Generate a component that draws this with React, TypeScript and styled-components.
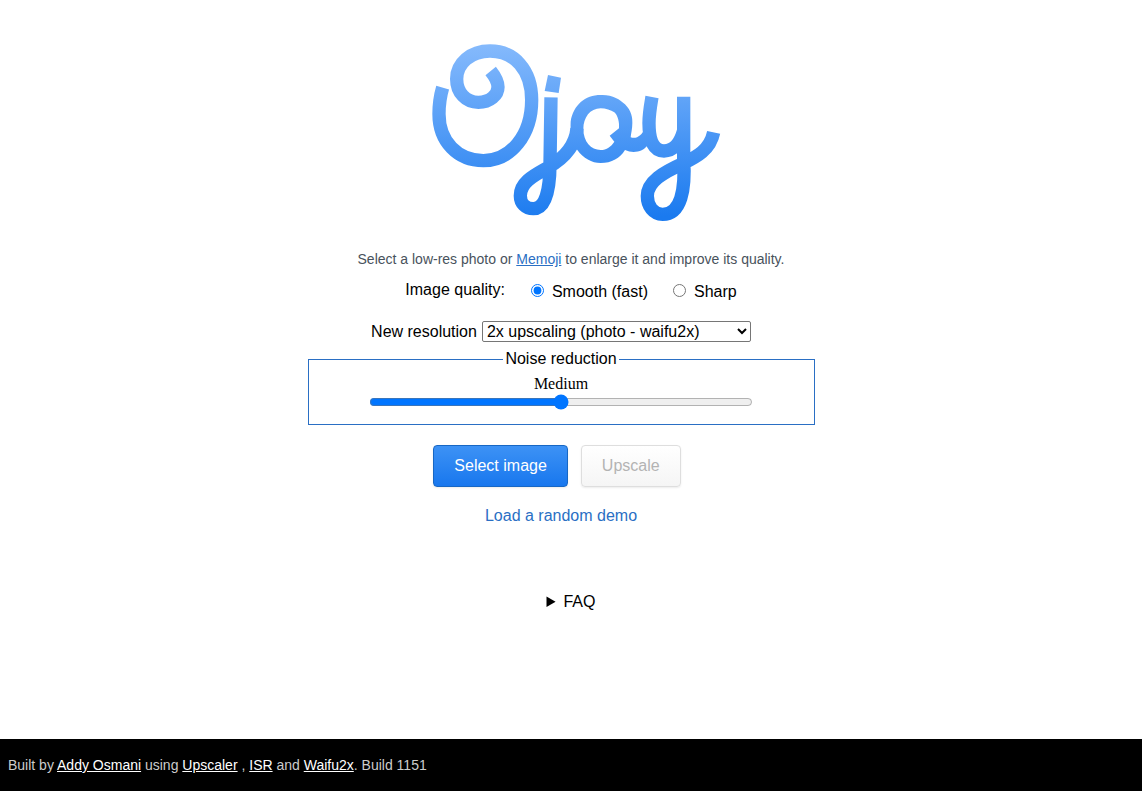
import React, { useState } from 'react';
import styled, { createGlobalStyle } from 'styled-components';

const GlobalStyle = createGlobalStyle`
  * { box-sizing: border-box; }
  body {
    margin: 0;
    background: #fff;
    color: #000;
    font: 16px/20px "Liberation Sans", Arial, sans-serif;
  }
`;

const Page = styled.div`
  min-height: 100vh;
  display: flex;
  flex-direction: column;
`;

const Main = styled.main`
  flex: 1;
  display: flex;
  flex-direction: column;
  align-items: center;
  padding-top: 35px;
`;

const Logo = styled.svg`
  display: block;
  width: 300px;
  height: 190px;
  margin-left: 8px;
`;

const Intro = styled.p`
  margin: 24px 0 0;
  color: #48525c;
  font-size: 14px;
`;

const BlueLink = styled.a`
  color: #2a6fc4;
`;

const Form = styled.form`
  width: 100%;
  display: flex;
  flex-direction: column;
  align-items: center;
  padding-right: 20px;
`;

const QualityRow = styled.div`
  display: flex;
  align-items: flex-start;
  margin: 11px 0 0 20px;
`;

const QualityTitle = styled.span`
  margin-right: 26px;
`;

const Choice = styled.label`
  display: flex;
  align-items: center;
  gap: 8px;
  margin-top: 2px;
  & + & { margin-left: 25px; }
`;

const Radio = styled.input`
  width: 13px;
  height: 13px;
  margin: 0 0 3px;
  accent-color: #0075ff;
`;

const ResolutionRow = styled.div`
  display: flex;
  align-items: center;
  gap: 5px;
  margin-top: 19px;
`;

const Select = styled.select`
  width: 269px;
  height: 21px;
  padding: 0;
  border: 1px solid #767676;
  border-radius: 2px;
  background: #fff;
  color: #000;
  font: 16px "Liberation Sans", Arial, sans-serif;
`;

const NoiseBox = styled.fieldset`
  width: 507px;
  max-width: 100%;
  height: 76px;
  margin: 7px 0 0;
  padding: 5px 0 0;
  border: 1px solid #2a6fc4;
  text-align: center;
`;

const Legend = styled.legend`
  margin: 0 auto;
  padding: 0 2px;
`;

const NoiseLevel = styled.output`
  display: block;
  font: 16px/20px "Liberation Serif", "Times New Roman", serif;
`;

const Slider = styled.input`
  display: block;
  width: 384px;
  max-width: 100%;
  height: 16px;
  margin: 0 auto;
  accent-color: #0075ff;
`;

const Actions = styled.div`
  display: flex;
  gap: 13px;
  margin: 20px 8px 0 0;
`;

const Button = styled.button<{ $primary?: boolean }>`
  height: 42px;
  padding: 0 20px;
  border: 1px solid ${(p) => (p.$primary ? '#1767c4' : '#dedede')};
  border-radius: 4px;
  background: ${(p) => (p.$primary
    ? 'linear-gradient(#3d92f5, #1877ee)'
    : 'linear-gradient(#ffffff, #f5f5f5)')};
  color: ${(p) => (p.$primary ? '#fff' : '#b3b3b3')};
  box-shadow: 0 1px 2px rgba(0, 0, 0, 0.08);
  font: 16px "Liberation Sans", Arial, sans-serif;
`;

const DemoLink = styled(BlueLink)`
  margin-top: 19px;
  text-decoration: none;
`;

const Faq = styled.details`
  margin: 66px 0 40px;
`;

const Footer = styled.footer`
  padding: 16px 8px;
  background: #000;
  color: #ccc;
  font-size: 14px;
`;

const FooterLink = styled.a`
  color: #fff;
`;

const levels = ['None', 'Low', 'Medium', 'High', 'Highest'];

function OjoyLogo() {
  return (
    <Logo viewBox="0 0 900 570" role="img" aria-label="Ojoy">
      <defs>
        <linearGradient id="sky" gradientUnits="userSpaceOnUse" x1="430" y1="25" x2="450" y2="555">
          <stop offset="0" stopColor="#84b9fc" />
          <stop offset="1" stopColor="#1a7aef" />
        </linearGradient>
      </defs>
      <g fill="none" stroke="url(#sky)" strokeWidth="40">
        <path d="M53 158C46 182 42 210 42 237C42 320 98 377 175 377C258 377 320 300 320 195C320 105 268 48 195 48C137 48 95 85 95 132C95 173 123 202 160 202C195 202 219 180 219 156C219 138 209 123 197 108" />
        <path d="M378 187L375 385C375 465 362 521 325 521C302 521 286 505 286 482C286 440 330 420 370 397C420 368 452 330 456 280" />
        <path d="M681 186C676 215 672 235 672 265C672 315 686 348 717 348C745 348 765 325 775 290" />
        <path d="M776 185V370C782 465 768 538 713 538C685 538 667 513 667 483C667 440 715 412 775 385C815 365 855 345 866 292" />
      </g>
      <path
        fill="url(#sky)"
        fillRule="evenodd"
        d="M437 260C445 210 480 180 527 180C560 178 585 193 600 208C619 227 623 248 622 265C622 282 618 295 617 307C635 313 650 302 660 280L668 330C655 350 625 357 600 345C585 370 560 384 527 384C500 384 475 370 457 345C442 325 435 290 437 260ZM527 220C495 220 475 248 475 282C475 320 498 345 527 345C545 345 558 335 568 320L554 302L582 280C584 262 578 240 568 232C558 225 542 220 527 220Z"
      />
      <path fill="url(#sky)" d="M369 120L408 128L401 174L359 168Z" />
    </Logo>
  );
}

export default function App() {
  const [quality, setQuality] = useState('smooth');
  const [noise, setNoise] = useState(2);

  return (
    <Page>
      <GlobalStyle />
      <Main>
        <OjoyLogo />
        <Intro>
          Select a low-res photo or <BlueLink href="#memoji">Memoji</BlueLink> to enlarge it and improve its quality.
        </Intro>
        <Form onSubmit={(e) => e.preventDefault()}>
          <QualityRow role="radiogroup" aria-labelledby="quality-title">
            <QualityTitle id="quality-title">Image quality:</QualityTitle>
            <Choice>
              <Radio type="radio" name="quality" checked={quality === 'smooth'} onChange={() => setQuality('smooth')} />
              Smooth (fast)
            </Choice>
            <Choice>
              <Radio type="radio" name="quality" checked={quality === 'sharp'} onChange={() => setQuality('sharp')} />
              Sharp
            </Choice>
          </QualityRow>
          <ResolutionRow>
            <label htmlFor="resolution">New resolution</label>
            <Select id="resolution">
              <option>2x upscaling (photo - waifu2x)</option>
            </Select>
          </ResolutionRow>
          <NoiseBox>
            <Legend>Noise reduction</Legend>
            <NoiseLevel htmlFor="noise">{levels[noise]}</NoiseLevel>
            <Slider
              id="noise"
              type="range"
              min="0"
              max="4"
              value={noise}
              aria-label="Noise reduction"
              onChange={(e) => setNoise(Number(e.target.value))}
            />
          </NoiseBox>
          <Actions>
            <Button type="button" $primary>Select image</Button>
            <Button type="submit" disabled>Upscale</Button>
          </Actions>
          <DemoLink href="#demo">Load a random demo</DemoLink>
        </Form>
        <Faq>
          <summary>FAQ</summary>
        </Faq>
      </Main>
      <Footer>
        Built by <FooterLink href="#addy">Addy Osmani</FooterLink> using{' '}
        <FooterLink href="#upscaler">Upscaler</FooterLink> , <FooterLink href="#isr">ISR</FooterLink> and{' '}
        <FooterLink href="#waifu2x">Waifu2x</FooterLink>. Build 1151
      </Footer>
    </Page>
  );
}
